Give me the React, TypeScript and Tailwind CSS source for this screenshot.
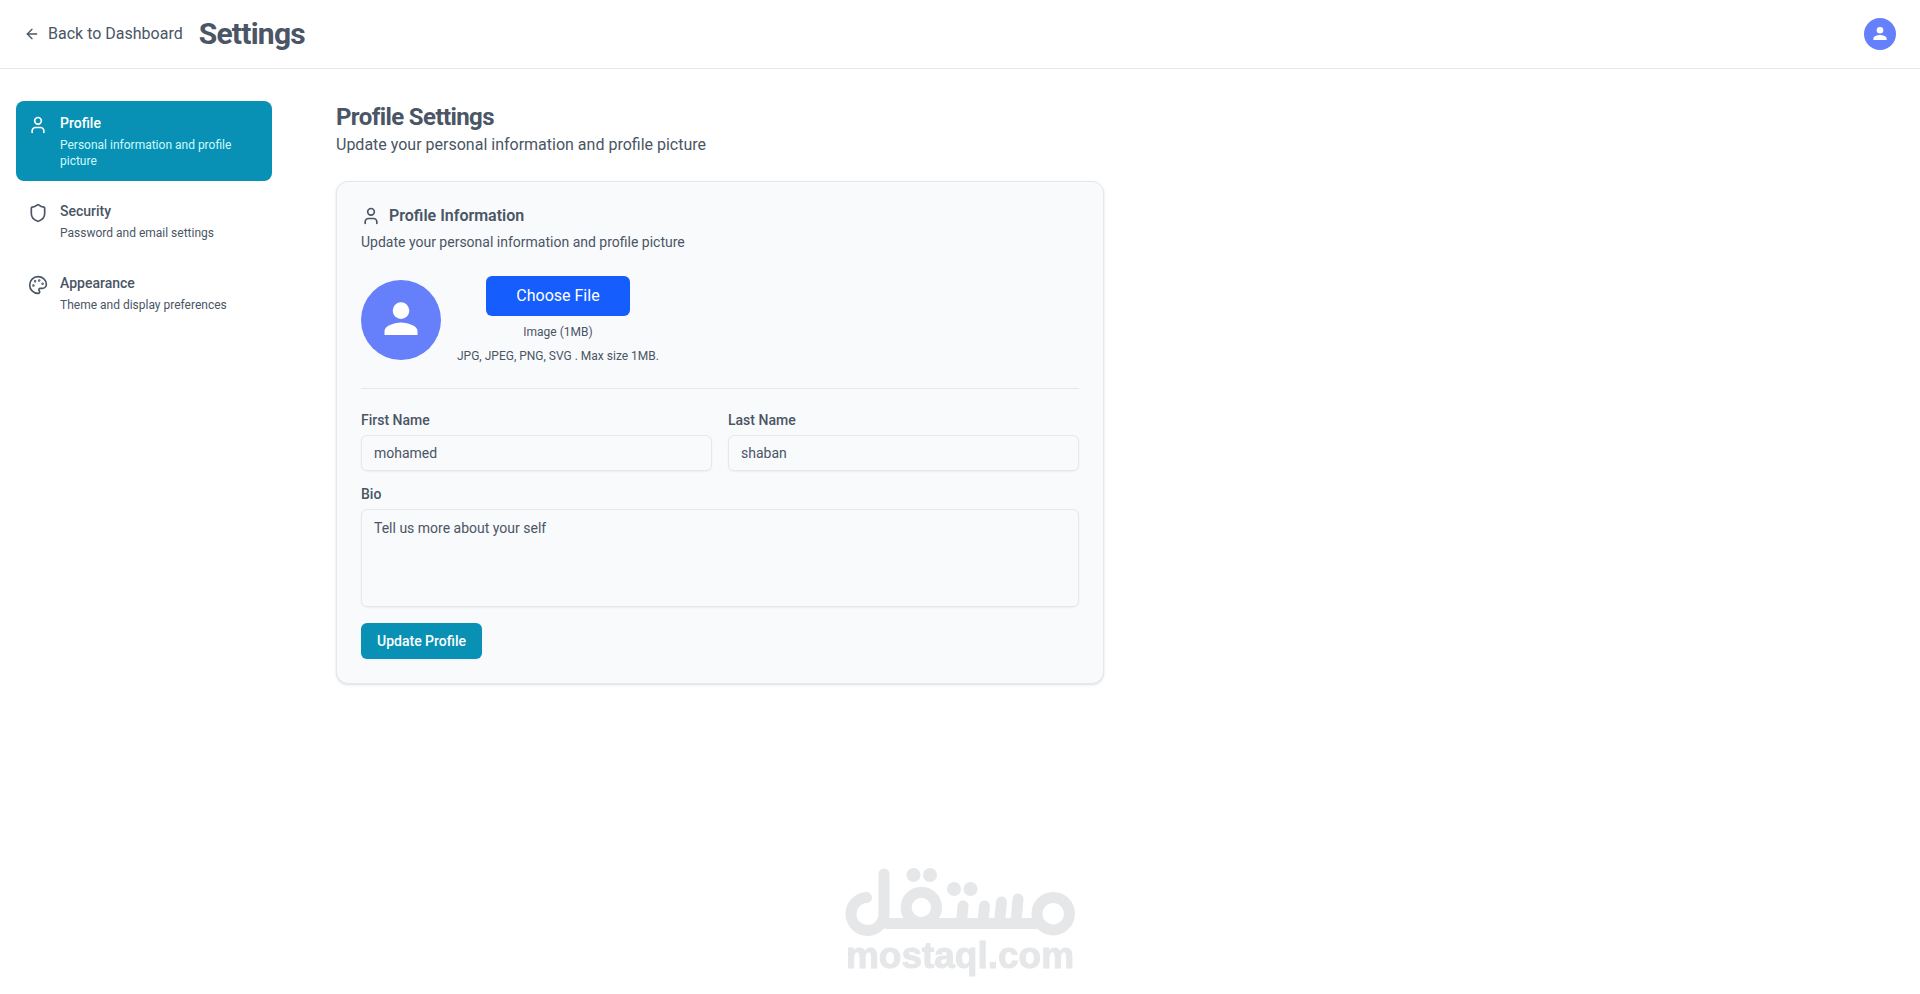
import { useState } from 'react';
import { ArrowLeft, Palette, Shield, User } from 'lucide-react';

const sections = [
    { id: 'profile', title: 'Profile', description: 'Personal information and profile picture', icon: User },
    { id: 'security', title: 'Security', description: 'Password and email settings', icon: Shield },
    { id: 'appearance', title: 'Appearance', description: 'Theme and display preferences', icon: Palette }
];

function Avatar({ className }: { className: string }) {
    return (
        <svg viewBox="0 0 80 80" className={className} role="img" aria-label="User avatar">
            <circle cx="40" cy="40" r="40" fill="#667ffa" />
            <circle cx="40" cy="30.6" r="8.3" fill="#fff" />
            <path d="M23.5 55v-4c0-5.6 11-8.5 16.500-8.500s16.500 2.900 16.500 8.500v4z" fill="#fff" />
        </svg>
    );
}

function Watermark() {
    return (
        <div className="pointer-events-none fixed inset-x-0 bottom-[18px] flex flex-col items-center text-[#e5e7e9]">
            <svg width="230" height="68" viewBox="0 0 230 68" fill="none" stroke="currentColor" strokeWidth="11" strokeLinecap="round" aria-hidden="true">
                <path d="M21.5 29.500A16.500 16.500 0 1 0 39 46V6" />
                <path d="M42 55.500H192" />
                <circle cx="76.300" cy="39.500" r="15.200" />
                <circle cx="208.200" cy="45.700" r="16.200" />
                <path d="M118 38l-1.500 16M139.500 38l-1.500 16M156.500 34l-2 20M173 31l-2 23" />
                <g fill="currentColor" stroke="none">
                    <circle cx="68.500" cy="7" r="7" />
                    <circle cx="85" cy="7" r="7" />
                    <circle cx="109" cy="21" r="7" />
                    <circle cx="125.500" cy="21" r="7" />
                </g>
            </svg>
            <span className="font-['Liberation_Sans',Arial,sans-serif] text-[37px] leading-10 font-bold [-webkit-text-stroke:1px_#e5e7e9]">
                mostaql.com
            </span>
        </div>
    );
}

const fieldClass =
    'w-full rounded-md border border-gray-200 bg-transparent px-3 text-sm text-gray-600 shadow-xs outline-none placeholder:text-gray-600 focus:border-cyan-600';

export default function App() {
    const [active, setActive] = useState('profile');

    return (
        <div className="min-h-screen bg-white font-[Roboto,sans-serif] text-gray-600">
            <header className="flex items-center justify-between border-b border-gray-200 px-6 py-4">
                <div className="flex items-center gap-4">
                    <a href="#dashboard" className="flex items-center gap-2">
                        <ArrowLeft className="size-4" />
                        Back to Dashboard
                    </a>
                    <h1 className="text-3xl font-bold tracking-tight">Settings</h1>
                </div>
                <button type="button" aria-label="Account menu" className="rounded-full">
                    <Avatar className="size-8" />
                </button>
            </header>

            <div className="flex gap-16 px-4 py-8">
                <nav className="flex w-64 shrink-0 flex-col gap-2">
                    {sections.map(({ id, title, description, icon: Icon }) => (
                        <button
                            key={id}
                            type="button"
                            onClick={() => setActive(id)}
                            className={`flex items-start gap-3 rounded-lg p-3 text-left ${active === id ? 'bg-[#0891b5] text-white' : ''}`}
                        >
                            <Icon className="mt-0.5 size-5 shrink-0" />
                            <span className="flex flex-col gap-1">
                                <span className="text-sm font-medium">{title}</span>
                                <span className={`text-xs ${active === id ? 'text-cyan-100' : ''}`}>{description}</span>
                            </span>
                        </button>
                    ))}
                </nav>

                <main className="max-w-3xl flex-1">
                    <h2 className="text-2xl font-bold tracking-tight">Profile Settings</h2>
                    <p>Update your personal information and profile picture</p>

                    <section className="mt-6 rounded-xl border border-gray-200 bg-[#f9fafc] p-6 shadow-sm">
                        <h3 className="flex items-center gap-2 leading-5 font-semibold">
                            <User className="size-5" />
                            Profile Information
                        </h3>
                        <p className="mt-1.5 text-sm">Update your personal information and profile picture</p>

                        <div className="mt-6 flex items-center gap-4">
                            <Avatar className="size-20" />
                            <div className="flex flex-col items-center gap-2 text-xs">
                                <button type="button" className="h-10 w-36 rounded-md bg-[#155dfc] text-base text-white">
                                    Choose File
                                </button>
                                <p>Image (1MB)</p>
                                <p>JPG, JPEG, PNG, SVG . Max size 1MB.</p>
                            </div>
                        </div>

                        <hr className="my-6 border-gray-200" />

                        <form className="flex flex-col gap-4" onSubmit={(e) => e.preventDefault()}>
                            <div className="grid grid-cols-2 gap-4">
                                <div className="flex flex-col gap-2">
                                    <label htmlFor="firstName" className="text-sm leading-none font-medium">First Name</label>
                                    <input id="firstName" defaultValue="mohamed" className={`h-9 ${fieldClass}`} />
                                </div>
                                <div className="flex flex-col gap-2">
                                    <label htmlFor="lastName" className="text-sm leading-none font-medium">Last Name</label>
                                    <input id="lastName" defaultValue="shaban" className={`h-9 ${fieldClass}`} />
                                </div>
                            </div>
                            <div className="flex flex-col gap-2">
                                <label htmlFor="bio" className="text-sm leading-none font-medium">Bio</label>
                                <textarea
                                    id="bio"
                                    rows={4}
                                    placeholder="Tell us more about your self"
                                    className={`resize-none py-2 ${fieldClass}`}
                                />
                            </div>
                            <button type="submit" className="h-9 self-start rounded-md bg-[#0891b5] px-4 text-sm font-medium text-white shadow-xs">
                                Update Profile
                            </button>
                        </form>
                    </section>
                </main>
            </div>

            <Watermark />
        </div>
    );
}
